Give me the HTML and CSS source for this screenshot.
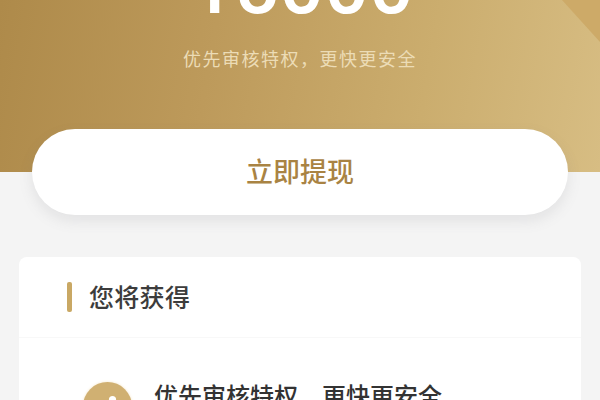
FILE: index.html
```html
<!DOCTYPE html>
<html lang="zh-CN">
<head>
<meta charset="utf-8">
<title>立即提现</title>
<link rel="stylesheet" href="styles.css">
</head>
<body>
<div class="page">
  <header class="hero">
    <div class="hero-corner"></div>
    <div class="amount">15000</div>
    <p class="hero-note">优先审核特权，更快更安全</p>
  </header>
  <div class="action"><button class="withdraw">立即提现</button></div>
  <section class="card">
    <div class="card-head"><span class="mark"></span><h2 class="card-title">您将获得</h2></div>
    <div class="benefit">
      <span class="badge">
        <svg class="badge-icon" viewBox="0 0 10 12"><path d="M5 0C7.500 0 9 1.500 9 4v8H1V4C1 1.500 2.500 0 5 0z" fill="#fff"/></svg>
      </span>
      <span class="benefit-text">优先审核特权，更快更安全</span>
    </div>
  </section>
</div>
</body>
</html>
```
FILE: styles.css
```css
* { box-sizing: border-box; }
html, body { margin: 0; height: 100%; }
body { background: #f4f4f4; font-family: "Noto Sans CJK SC", "Noto Sans", sans-serif; overflow: hidden; }
.page { height: 400px; overflow: hidden; display: flex; flex-direction: column; }
.hero {
  position: relative;
  height: 172px;
  flex: none;
  overflow: hidden;
  display: flex;
  flex-direction: column;
  align-items: center;
  background: linear-gradient(100deg, #ae8a4a 0%, #bd9a5b 35%, #cbad6e 70%, #d7bd83 100%);
}
.hero-corner {
  position: absolute;
  top: 0;
  right: 0;
  width: 38px;
  height: 42px;
  background: #cdaa68;
  clip-path: polygon(0 0, 100% 0, 100% 100%);
}
.amount {
  margin-top: -48px;
  height: 70px;
  line-height: 70px;
  font-family: Roboto, sans-serif;
  font-size: 78px;
  letter-spacing: 0.5px;
  font-weight: 500;
  color: #fff;
  margin-left: 4px;
}
.hero-note {
  margin: 23px 0 0;
  font-size: 18px;
  line-height: 26px;
  letter-spacing: 1.5px;
  color: #ecdcb6;
}
.action { position: relative; margin: -43px 32px 0; flex: none; }
.withdraw {
  display: block;
  width: 100%;
  height: 86px;
  border: 0;
  padding: 0 0 4px;
  border-radius: 43px;
  background: #fff;
  box-shadow: 0 6px 14px rgba(120, 120, 130, 0.14);
  font-family: inherit;
  font-size: 27px;
  font-weight: 500;
  color: #a98343;
}
.card {
  flex: none;
  margin: 42px 19px 0;
  height: 200px;
  background: #fff;
  border-radius: 8px;
}
.card-head {
  height: 81px;
  padding-left: 48px;
  display: flex;
  align-items: center;
  gap: 17px;
  border-bottom: 1px solid #f8f8f8;
}
.mark { width: 5px; height: 30px; border-radius: 2px; background: #c9a864; }
.card-title { margin: 0 0 2px; font-size: 25px; letter-spacing: 0.3px; font-weight: 500; color: #3c3c3c; line-height: 34px; }
.benefit { display: flex; align-items: flex-start; padding: 44px 0 0 64px; gap: 22px; }
.badge {
  width: 49px;
  height: 49px;
  flex: none;
  border-radius: 50%;
  background: #d0b072;
  box-shadow: 0 0 3px #f6e6c8;
  display: flex;
  justify-content: center;
  padding: 14px 0 0 10px;
}
.badge-icon { width: 9px; height: 11px; }
.benefit-text { margin-top: -4px; font-size: 24px; line-height: 34px; color: #333; font-weight: 500; white-space: nowrap; }
```
